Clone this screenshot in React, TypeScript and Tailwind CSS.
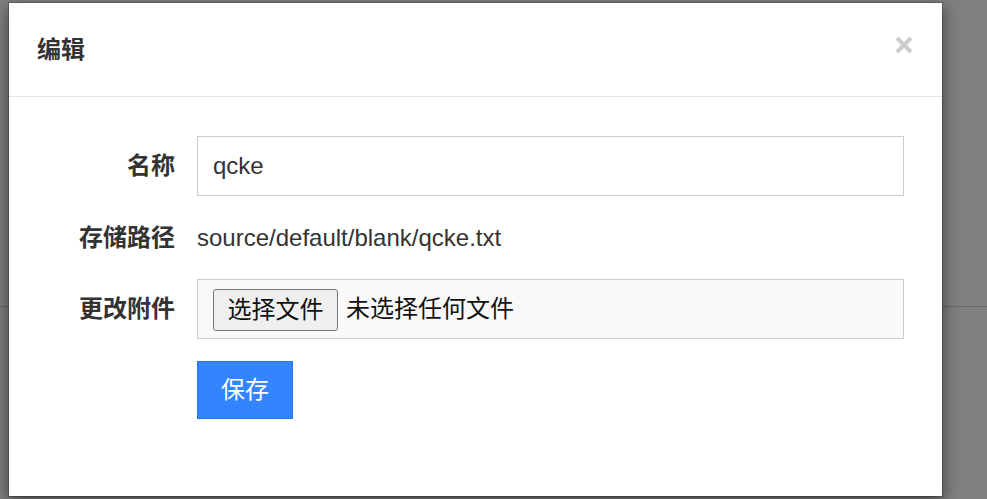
import React from "react";

const font = { fontFamily: '"Liberation Sans", Arial, "Noto Sans CJK SC", sans-serif' };

function CloseIcon() {
  return (
    <svg width="18" height="18" viewBox="0 0 18 18" className="block">
      <path d="M2 2 L16 16 M16 2 L2 16" stroke="#cccccc" strokeWidth="4.2" strokeLinecap="butt" />
    </svg>
  );
}

function Row({ label, children, className = "" }: { label: string; children: React.ReactNode; className?: string }) {
  return (
    <div className={`flex items-center gap-[22px] ${className}`}>
      <div className="w-[166px] shrink-0 text-right text-[24px] font-bold text-[#333]">{label}</div>
      {children}
    </div>
  );
}

export default function App() {
  return (
    <div className="relative h-[499px] w-full overflow-hidden bg-[#808080]" style={font}>
      {/* page behind the backdrop */}
      <div className="h-[306px]" />
      <div className="h-px bg-[#6a6a6a]" />

      {/* modal */}
      <div className="absolute inset-0">
        <div className="ml-[8px] mt-[2px] flex h-[495px] w-[935px] flex-col border border-black/20 bg-white bg-clip-padding shadow-[0_5px_15px_rgba(0,0,0,0.5)]">
          <div className="flex h-[94px] shrink-0 items-center justify-between border-b border-[#e5e5e5] pl-[28px] pr-[29px]">
            <h4 className="text-[24px] font-bold leading-none text-[#333]">编辑</h4>
            <button className="-mt-[10px]">
              <CloseIcon />
            </button>
          </div>

          <div className="flex flex-col pt-[39px] text-[#333]">
            <Row label="名称" className="mb-[12px]">
              <input
                defaultValue="qcke"
                className="h-[60px] w-[707px] border border-[#ccc] bg-white px-[15px] text-[24px] text-[#333] outline-none"
              />
            </Row>
            <Row label="存储路径" className="mb-[11px] h-[60px]">
              <div className="text-[24px] text-[#333]">source/default/blank/qcke.txt</div>
            </Row>
            <Row label="更改附件" className="mb-[22px]">
              <div className="flex h-[60px] w-[707px] items-center border border-[#ccc] bg-[#f9f9f9] pl-[15px]">
                <span className="mt-[2px] flex h-[42px] w-[125px] items-center justify-center rounded-[3px] border border-[#767676] bg-[#efefef] text-[24px] text-[#111]">
                  选择文件
                </span>
                <span className="ml-[8px] text-[24px] text-[#111]">未选择任何文件</span>
              </div>
            </Row>
            <div className="pl-[188px]">
              <button className="h-[58px] w-[96px] border border-[#2a76ee] bg-[#3385ff] text-[24px] text-white">
                保存
              </button>
            </div>
          </div>
        </div>
      </div>
    </div>
  );
}
